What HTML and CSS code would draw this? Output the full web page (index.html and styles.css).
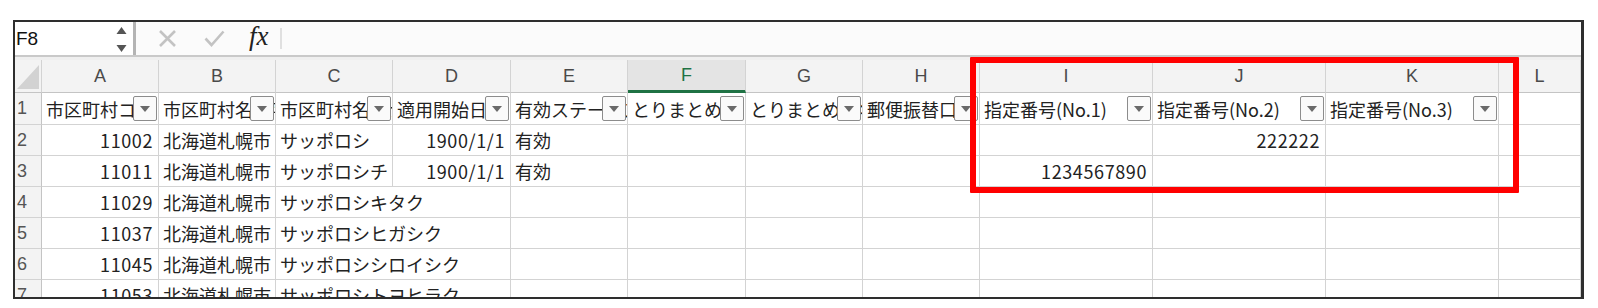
FILE: index.html
```html
<!DOCTYPE html>
<html lang="ja">
<head>
<meta charset="utf-8">
<title>Excel</title>
<link rel="stylesheet" href="styles.css">
</head>
<body>
<div class="frame">
  <div class="fbar">
    <div class="namebox">
      <span class="ref">F8</span>
      <svg class="spin" width="11" height="26" viewBox="0 0 11 26"><path d="M5.5 1 L10.5 8 L0.5 8 Z" fill="#555"/><path d="M0.5 19 L10.5 19 L5.5 26 Z" fill="#555"/></svg>
    </div>
    <div class="vdiv"></div>
    <svg class="ico cross" width="19" height="19" viewBox="0 0 19 19"><path d="M2 2 L17 17 M17 2 L2 17" stroke="#c3c3c3" stroke-width="2.6" fill="none"/></svg>
    <svg class="ico check" width="21" height="17" viewBox="0 0 21 17"><path d="M1.5 8.5 L7.5 15 L19.5 1.5" stroke="#c3c3c3" stroke-width="2.6" fill="none"/></svg>
    <span class="fx">fx</span>
    <div class="vdiv2"></div>
    <div class="finput"></div>
  </div>
  <div class="band"></div>
  <div class="grid">
    <div class="ch corner"><svg width="24" height="26" viewBox="0 0 24 26"><path d="M23 1 L23 25 L1 25 Z" fill="#d2d2d2"/></svg></div>
    <div class="ch">A</div><div class="ch">B</div><div class="ch">C</div><div class="ch">D</div><div class="ch">E</div><div class="ch sel">F</div><div class="ch">G</div><div class="ch">H</div><div class="ch">I</div><div class="ch">J</div><div class="ch">K</div><div class="ch">L</div>

    <div class="rh">1</div>
    <div class="c hd"><span>市区町村コード</span><i class="dd"></i></div>
    <div class="c hd"><span>市区町村名漢字</span><i class="dd"></i></div>
    <div class="c hd"><span>市区町村名カナ</span><i class="dd"></i></div>
    <div class="c hd"><span>適用開始日付</span><i class="dd"></i></div>
    <div class="c hd"><span>有効ステータス</span><i class="dd"></i></div>
    <div class="c hd"><span>とりまとめ局</span><i class="dd"></i></div>
    <div class="c hd"><span>とりまとめ局名</span><i class="dd"></i></div>
    <div class="c hd"><span>郵便振替口座</span><i class="dd"></i></div>
    <div class="c hd"><span>指定番号(No.1)</span><i class="dd"></i></div>
    <div class="c hd"><span>指定番号(No.2)</span><i class="dd"></i></div>
    <div class="c hd"><span>指定番号(No.3)</span><i class="dd"></i></div>
    <div class="c"></div>

    <div class="rh">2</div>
    <div class="c n">11002</div><div class="c">北海道札幌市</div><div class="c">サッポロシ</div><div class="c n">1900/1/1</div><div class="c">有効</div><div class="c"></div><div class="c"></div><div class="c"></div><div class="c"></div><div class="c n">222222</div><div class="c"></div><div class="c"></div>

    <div class="rh">3</div>
    <div class="c n">11011</div><div class="c">北海道札幌市</div><div class="c">サッポロシチ</div><div class="c n">1900/1/1</div><div class="c">有効</div><div class="c"></div><div class="c"></div><div class="c"></div><div class="c n">1234567890</div><div class="c"></div><div class="c"></div><div class="c"></div>

    <div class="rh">4</div>
    <div class="c n">11029</div><div class="c">北海道札幌市</div><div class="c span2">サッポロシキタク</div><div class="c"></div><div class="c"></div><div class="c"></div><div class="c"></div><div class="c"></div><div class="c"></div><div class="c"></div><div class="c"></div>

    <div class="rh">5</div>
    <div class="c n">11037</div><div class="c">北海道札幌市</div><div class="c span2">サッポロシヒガシク</div><div class="c"></div><div class="c"></div><div class="c"></div><div class="c"></div><div class="c"></div><div class="c"></div><div class="c"></div><div class="c"></div>

    <div class="rh">6</div>
    <div class="c n">11045</div><div class="c">北海道札幌市</div><div class="c span2">サッポロシシロイシク</div><div class="c"></div><div class="c"></div><div class="c"></div><div class="c"></div><div class="c"></div><div class="c"></div><div class="c"></div><div class="c"></div>

    <div class="rh">7</div>
    <div class="c n">11053</div><div class="c">北海道札幌市</div><div class="c span2">サッポロシトヨヒラク</div><div class="c"></div><div class="c"></div><div class="c"></div><div class="c"></div><div class="c"></div><div class="c"></div><div class="c"></div><div class="c"></div>
  </div>
</div>
<div class="redbox"></div>
</body>
</html>
```

FILE: styles.css
```css
html, body {
  margin: 0;
  padding: 0;
  background: #ffffff;
}
body {
  position: relative;
  width: 1598px;
  height: 308px;
  overflow: hidden;
  font-family: "Noto Sans CJK JP", "Liberation Sans", sans-serif;
}
.frame {
  margin: 20px 0 0 13px;
  width: 1566px;
  height: 275px;
  border-style: solid;
  border-color: #2e2e2e;
  border-width: 2px 3px 2px 2px;
  overflow: hidden;
  background: #fff;
}
.fbar {
  height: 33px;
  display: flex;
  align-items: center;
  background: #fbfbfb;
}
.namebox {
  width: 118px;
  height: 33px;
  display: flex;
  align-items: center;
  justify-content: space-between;
  padding: 0 6px 0 1px;
  box-sizing: border-box;
  background: #fff;
}
.ref {
  font-family: "Liberation Sans", sans-serif;
  font-size: 19px;
  color: #111;
}
.spin { display: block; }
.vdiv {
  width: 3px;
  height: 33px;
  background: #b4b4b4;
}
.ico { display: block; flex: none; }
.cross { margin-left: 22px; }
.check { margin-left: 27px; }
.fx {
  margin-left: 24px;
  font-family: "Liberation Serif", serif;
  font-style: italic;
  font-size: 27px;
  color: #222;
  line-height: 1;
  position: relative;
  top: -2px;
}
.vdiv2 {
  margin-left: 11px;
  width: 2px;
  height: 21px;
  background: #e0e0e0;
}
.finput { flex: 1; }
.band {
  height: 3px;
  border-top: 2px solid #c9c9c9;
  background: #efefef;
}
.grid {
  display: grid;
  grid-template-columns: 27px 117px 117px 117px 118px 117px 118px 117px 117px 173px 173px 173px 82px;
  grid-template-rows: 33px 32px 31px 31px 31px 31px 31px 31px;
}
.ch {
  box-sizing: border-box;
  background: #f3f3f3;
  border-right: 1px solid #d3d3d3;
  border-bottom: 1px solid #c4c4c4;
  display: flex;
  align-items: center;
  justify-content: center;
  font-family: "Liberation Sans", sans-serif;
  font-size: 18px;
  color: #4a4a4a;
}
.ch.corner {
  justify-content: flex-start;
  align-items: flex-start;
  padding: 4px 0 0 1px;
}
.ch.corner svg { display: block; }
.ch.sel {
  background: #e4e4e4;
  color: #1f7244;
  border-bottom: 3px solid #1f7244;
}
.rh {
  box-sizing: border-box;
  background: #f3f3f3;
  border-right: 1px solid #c4c4c4;
  border-bottom: 1px solid #d3d3d3;
  display: flex;
  align-items: center;
  padding-left: 2px;
  font-family: "Liberation Sans", sans-serif;
  font-size: 18px;
  color: #555;
}
.c {
  position: relative;
  box-sizing: border-box;
  border-right: 1px solid #d3d3d3;
  border-bottom: 1px solid #d3d3d3;
  display: flex;
  align-items: center;
  padding: 0 4px 0 4px;
  overflow: hidden;
  white-space: nowrap;
  font-size: 18px;
  color: #222;
}
.c.n {
  justify-content: flex-end;
  padding-right: 5px;
  letter-spacing: 0.6px;
}
.c.span2 { grid-column: span 2; }
.c.hd span { display: block; }
.dd {
  position: absolute;
  right: 1px;
  top: 3px;
  width: 24px;
  height: 25px;
  box-sizing: border-box;
  border: 1px solid #8c8c8c;
  border-radius: 2px;
  background: #fafafa;
}
.dd::after {
  content: "";
  position: absolute;
  left: 6px;
  top: 9px;
  border-left: 5.5px solid transparent;
  border-right: 5.5px solid transparent;
  border-top: 6px solid #6a6a6a;
}
.redbox {
  position: absolute;
  left: 970px;
  top: 57px;
  width: 549px;
  height: 136px;
  box-sizing: border-box;
  border: 6px solid #ff0000;
  border-radius: 1px;
}
```
